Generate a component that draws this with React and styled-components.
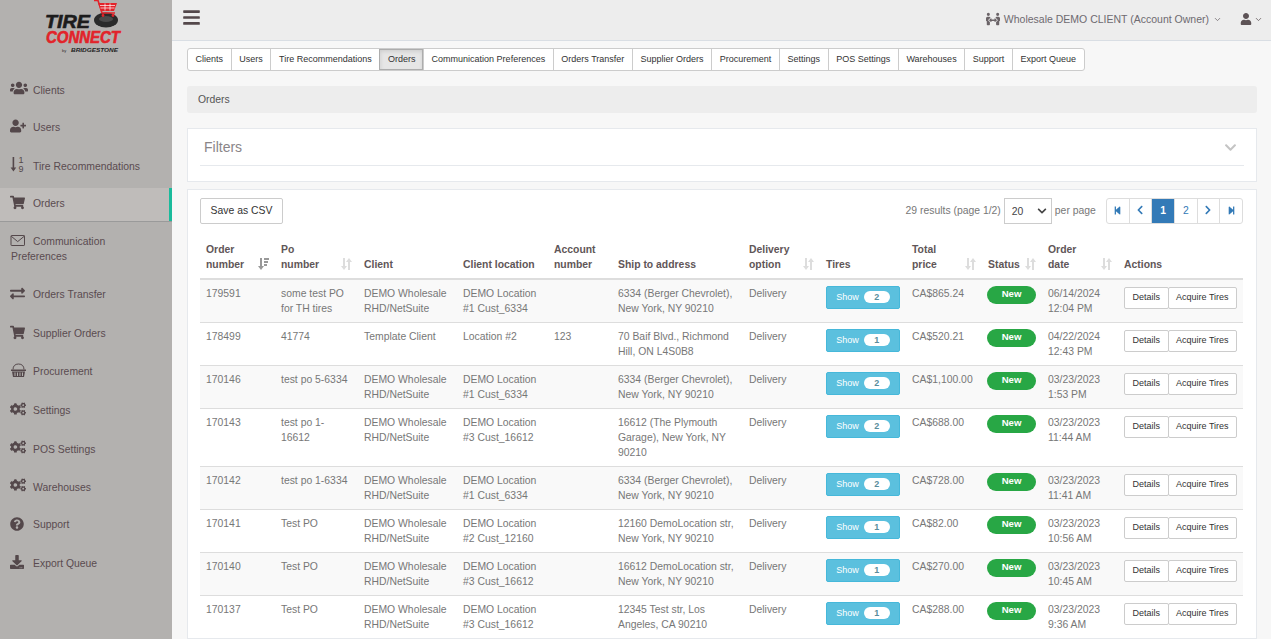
import React from 'react'
import styled, { createGlobalStyle } from 'styled-components'
import {
  FaUsers, FaUserPlus, FaShoppingCart, FaExchangeAlt, FaCogs, FaQuestionCircle, FaDownload,
  FaBars, FaUser, FaPeopleArrows, FaChevronDown, FaChevronLeft, FaChevronRight,
  FaStepBackward, FaStepForward,
} from 'react-icons/fa'
import { ChevronDown } from 'lucide-react'

const GlobalStyle = createGlobalStyle`
  html, body { margin: 0; height: 100%; overflow: hidden; }
  body { font-family: "Liberation Sans", Arial, sans-serif; font-size: 11px; color: #6f686a; background: #f7f7f7; }
  * { box-sizing: border-box; }
`

const Page = styled.div`
  display: flex;
  height: 100vh;
  overflow: hidden;
`
const Sidebar = styled.aside`
  width: 172px;
  flex: none;
  background: #b3b1af;
`
const LogoBox = styled.div`
  height: 73px;
  padding-left: 42px;
`
const SideItem = styled.div`
  padding: 7px 10px 11px 11px;
  margin-bottom: 5.3px;
  line-height: 15px;
  font-size: 10.4px;
  color: #5a4b50;
  height: ${p => (p.$tall ? 48 : 33)}px;
  ${p => p.$active && `
    background: #bfbcba;
    border-right: 3px solid #1abb9c;
    box-shadow: 0 1px 0 #9a9a9a;
  `}
`
const SideIcon = styled.span`
  display: inline-flex;
  align-items: center;
  width: 22px;
  height: 15px;
  vertical-align: -3px;
  color: #54484b;
  svg { flex: none; margin-left: -1px; }
`
const Content = styled.div`
  flex: 1;
  min-width: 0;
`
const TopBar = styled.header`
  height: 41px;
  background: #ededed;
  border-bottom: 1px solid #d9dee4;
  display: flex;
  align-items: center;
  justify-content: space-between;
  padding: 0 8px 2px 11px;
  color: #6e6a70;
`
const Burger = styled.span`
  color: #54484b;
  display: flex;
  margin: 0 0 3px -1px;
`
const Account = styled.div`
  display: flex;
  align-items: center;
  gap: 4px;
  font-size: 10.5px;
  svg { color: #6b6468; }
`
const UserMenu = styled.span`
  margin-left: 14px;
  display: flex;
  align-items: center;
  gap: 2px;
  svg { color: #5d5356; }
`
const Main = styled.main`
  padding: 7px 14px 0 15px;
`
const Tabs = styled.nav`
  display: inline-flex;
  height: 23px;
  background: #fff;
  border: 1px solid #ccc;
  border-radius: 3px;
`
const Tab = styled.span`
  padding: 0 7.6px;
  line-height: 20px;
  font-size: 9px;
  color: #333;
  border-left: ${p => (p.$first ? 'none' : '1px solid #ccc')};
  ${p => p.$active && `
    background: #e6e6e6;
    box-shadow: inset 0 2px 4px rgba(0,0,0,.125);
    outline: 1px solid #adadad;
    outline-offset: -1px;
  `}
`
const Crumb = styled.div`
  margin-top: 15px;
  height: 27px;
  background: #ededed;
  border-radius: 3px;
  padding: 0 11px;
  line-height: 27px;
  font-size: 10.4px;
  color: #555;
`
const Panel = styled.section`
  background: #fff;
  border: 1px solid #e6e9ed;
  padding: ${p => p.$pad};
  margin-top: ${p => p.$top}px;
`
const FilterTitle = styled.div`
  display: flex;
  justify-content: space-between;
  align-items: center;
  height: 37px;
  padding: 0 7px 0 4px;
  border-bottom: 1px solid #e6e9ed;
  font-size: 14px;
  color: #8a8588;
  svg { color: #c4c4c4; }
`
const Controls = styled.div`
  display: flex;
  justify-content: space-between;
  align-items: center;
  height: 26px;
  margin-bottom: 18px;
`
const SaveButton = styled.button`
  height: 26px;
  width: 83px;
  padding: 0 0 2px;
  font: 10.4px "Liberation Sans", Arial, sans-serif;
  color: #333;
  background: #fff;
  border: 1px solid #ccc;
  border-radius: 2px;
`
const Paging = styled.div`
  display: flex;
  align-items: center;
  font-size: 10.4px;
  color: #777;
`
const Caption = styled.span`
  padding-bottom: 2px;
`
const FakeSelect = styled.span`
  display: flex;
  align-items: center;
  justify-content: space-between;
  width: 48px;
  height: 26px;
  margin: 0 3px;
  padding: 0 4px 0 7px;
  border: 1px solid #ccc;
  color: #444;
  svg { color: #444; }
`
const Pager = styled.div`
  display: flex;
  margin-left: 11px;
`
const PageCell = styled.span`
  width: 23.7px;
  height: 26px;
  margin-left: -1px;
  padding-bottom: 2px;
  display: flex;
  align-items: center;
  justify-content: center;
  border: 1px solid #ddd;
  color: ${p => (p.$active ? '#fff' : '#337ab7')};
  background: ${p => (p.$active ? '#337ab7' : '#fff')};
  font-weight: ${p => (p.$active ? 700 : 400)};
  &:first-child { border-radius: 3px 0 0 3px; }
  &:last-child { border-radius: 0 3px 3px 0; }
`
const Table = styled.table`
  width: 1043px;
  table-layout: fixed;
  border-collapse: collapse;
  font-size: 10.4px;
  line-height: 15px;
`
const Th = styled.th`
  position: relative;
  text-align: left;
  vertical-align: bottom;
  padding: 0 ${p => (p.$sortable ? 28 : 6)}px 6px 6px;
  font-weight: 700;
  color: #5f5658;
  border-bottom: 2px solid #ddd;
`
const SortMark = styled.svg`
  position: absolute;
  right: 6px;
  bottom: 8px;
  width: 11px;
  height: 12px;
  fill: ${p => (p.$on ? '#999' : '#ddd')};
`
const Tr = styled.tr`
  background: ${p => (p.$odd ? '#f9f9f9' : '#fff')};
`
const Td = styled.td`
  vertical-align: top;
  padding: 6px;
  border-top: 1px solid #ddd;
  color: #777;
`
const ShowButton = styled.span`
  display: flex;
  align-items: center;
  justify-content: center;
  gap: 5px;
  width: 74px;
  height: 23px;
  padding-bottom: 1px;
  background: #5bc0de;
  border: 1px solid #46b8da;
  border-radius: 2px;
  color: #fff;
  font-size: 9px;
`
const Count = styled.span`
  min-width: 26px;
  height: 12px;
  line-height: 12px;
  text-align: center;
  background: #fff;
  border-radius: 6px;
  color: #5a8d9c;
  font-weight: 700;
  font-size: 9px;
`
const StatusPill = styled.span`
  display: block;
  width: 49px;
  height: 18px;
  margin-left: -1px;
  line-height: 16px;
  text-align: center;
  background: #28a745;
  color: #fff;
  font-size: 9.6px;
  font-weight: 700;
  border-radius: 9px;
`
const ActionGroup = styled.div`
  display: flex;
  width: 113px;
  margin-top: 1px;
`
const ActionButton = styled.span`
  height: 22px;
  line-height: 18px;
  width: ${p => p.$w}px;
  text-align: center;
  background: #fff;
  border: 1px solid #ccc;
  border-radius: 2px;
  color: #333;
  font-size: 9px;
  margin-left: ${p => (p.$joined ? -1 : 0)}px;
`

function SortNumIcon() {
  return (
    <svg width="16" height="16" viewBox="0 0 16 16" fill="currentColor">
      <path d="M2.6 1h1.6v10.5h2L3.4 15.5.6 11.5h2z" />
      <text x="8.500" y="7" fontFamily="Liberation Sans" fontSize="9">1</text>
      <text x="8.500" y="15.500" fontFamily="Liberation Sans" fontSize="9">9</text>
    </svg>
  )
}

function MailIcon() {
  return (
    <svg width="15" height="15" viewBox="0 0 15 15" fill="none" stroke="currentColor" strokeWidth="1">
      <rect x="1" y="2.5" width="13.5" height="10" rx=".6" />
      <path d="M1.2 3.2 7.7 8.6l6.6-5.4" />
    </svg>
  )
}

function BasketIcon() {
  return (
    <svg width="17" height="15" viewBox="0 0 17 15" fill="currentColor">
      <path d="M3 6.5C3 3 5 1 8.5 1S14 3 14 6.5" fill="none" stroke="currentColor" strokeWidth="1" />
      <path d="M1 6.5h15V8H1z" />
      <path d="M2 8.500h13L14 14H3zM4.500 9.500v3.500h1v-3.500zm2.500 0v3.500h1v-3.500zm2.500 0v3.500h1v-3.500zm2.500 0v3.500h1v-3.500z" fillRule="evenodd" />
    </svg>
  )
}

const menu = [
  [<FaUsers size={18} />, 'Clients'],
  [<FaUserPlus size={16} />, 'Users'],
  [<SortNumIcon />, 'Tire Recommendations'],
  [<FaShoppingCart size={15} />, 'Orders', true],
  [<MailIcon />, 'Communication Preferences'],
  [<FaExchangeAlt size={15} />, 'Orders Transfer'],
  [<FaShoppingCart size={15} />, 'Supplier Orders'],
  [<BasketIcon />, 'Procurement'],
  [<FaCogs size={16} />, 'Settings'],
  [<FaCogs size={16} />, 'POS Settings'],
  [<FaCogs size={16} />, 'Warehouses'],
  [<FaQuestionCircle size={14} />, 'Support'],
  [<FaDownload size={14} />, 'Export Queue'],
]

const tabs = ['Clients', 'Users', 'Tire Recommendations', 'Orders', 'Communication Preferences', 'Orders Transfer', 'Supplier Orders', 'Procurement', 'Settings', 'POS Settings', 'Warehouses', 'Support', 'Export Queue']

const cols = [
  ['Order number', 75, 'on'],
  ['Po number', 83, 'off'],
  ['Client', 99],
  ['Client location', 91],
  ['Account number', 64],
  ['Ship to address', 131],
  ['Delivery option', 77, 'off'],
  ['Tires', 86],
  ['Total price', 76, 'off'],
  ['Status', 60, 'off'],
  ['Order date', 76, 'off'],
  ['Actions', 125],
]

const W = 'DEMO Wholesale RHD/NetSuite'
const rows = [
  ['179591', 'some test PO for TH tires', W, 'DEMO Location #1 Cust_6334', '', '6334 (Berger Chevrolet), New York, NY 90210', 2, 'CA$865.24', '06/14/2024 12:04 PM'],
  ['178499', '41774', 'Template Client', 'Location #2', '123', '70 Baif Blvd., Richmond Hill, ON L4S0B8', 1, 'CA$520.21', '04/22/2024 12:43 PM'],
  ['170146', 'test po 5-6334', W, 'DEMO Location #1 Cust_6334', '', '6334 (Berger Chevrolet), New York, NY 90210', 2, 'CA$1,100.00', '03/23/2023 1:53 PM'],
  ['170143', 'test po 1-16612', W, 'DEMO Location #3 Cust_16612', '', '16612 (The Plymouth Garage), New York, NY 90210', 2, 'CA$688.00', '03/23/2023 11:44 AM'],
  ['170142', 'test po 1-6334', W, 'DEMO Location #1 Cust_6334', '', '6334 (Berger Chevrolet), New York, NY 90210', 2, 'CA$728.00', '03/23/2023 11:41 AM'],
  ['170141', 'Test PO', W, 'DEMO Location #2 Cust_12160', '', '12160 DemoLocation str, New York, NY 90210', 1, 'CA$82.00', '03/23/2023 10:56 AM'],
  ['170140', 'Test PO', W, 'DEMO Location #3 Cust_16612', '', '16612 DemoLocation str, New York, NY 90210', 1, 'CA$270.00', '03/23/2023 10:45 AM'],
  ['170137', 'Test PO', W, 'DEMO Location #3 Cust_16612', '', '12345 Test str, Los Angeles, CA 90210', 1, 'CA$288.00', '03/23/2023 9:36 AM'],
]

function Logo() {
  return (
    <svg width="90" height="60" viewBox="0 0 90 60">
      <ellipse cx="64" cy="20" rx="12" ry="7.5" fill="#2a2a2a" />
      <ellipse cx="64" cy="19" rx="7" ry="3" fill="#4a4a4a" />
      <path d="M52 .5 L56 .5 L60 13 L73 13" fill="none" stroke="#e2232a" strokeWidth="1.6" />
      <path d="M56 3 H75 L72 11 H59 Z" fill="#e2232a" />
      <path d="M58 5.500 H73 M58.500 8 H72.500 M63 3.500 V10.500 M68 3.500 V10.500" stroke="#fff" strokeWidth="0.7" />
      <circle cx="61" cy="15.500" r="1.400" fill="#e2232a" />
      <circle cx="71" cy="15.500" r="1.400" fill="#e2232a" />
      <text x="3" y="28" fontFamily="Liberation Sans" fontWeight="700" fontStyle="italic" fontSize="19" fill="#1c1c1c" stroke="#1c1c1c" strokeWidth=".6" textLength="45" lengthAdjust="spacingAndGlyphs">TIRE</text>
      <text x="4" y="43" fontFamily="Liberation Sans" fontWeight="700" fontStyle="italic" fontSize="16" fill="#e2232a" stroke="#e2232a" strokeWidth=".6" textLength="74" lengthAdjust="spacingAndGlyphs">CONNECT</text>
      <text x="20" y="52" fontFamily="Liberation Sans" fontSize="4" fill="#333">by</text>
      <text x="29" y="52" fontFamily="Liberation Sans" fontWeight="700" fontStyle="italic" fontSize="6" fill="#222" textLength="47" lengthAdjust="spacingAndGlyphs">BRIDGESTONE</text>
    </svg>
  )
}

function SortIcon({ on }) {
  return (
    <SortMark $on={on} viewBox="0 0 11 12">
      <path d="M2 0h2v8h2l-3 4-3-4h2z" />
      {on ? <path d="M6 0h5v2H6zM6 3h4v2H6zM6 6h3v2H6z" /> : <path d="M7 12h2V4h2L8 0 5 4h2z" />}
    </SortMark>
  )
}

export default function App() {
  return (
    <>
      <GlobalStyle />
      <Page>
        <Sidebar>
          <LogoBox><Logo /></LogoBox>
          {menu.map(([icon, label, active]) => (
            <SideItem key={label} $active={active} $tall={label.startsWith('Comm')}>
              <SideIcon>{icon}</SideIcon>
              {label}
            </SideItem>
          ))}
        </Sidebar>
        <Content>
          <TopBar>
            <Burger><FaBars size={19} /></Burger>
            <Account>
              <FaPeopleArrows size={14} />
              Wholesale DEMO CLIENT (Account Owner)
              <ChevronDown size={9} strokeWidth={2} />
              <UserMenu>
                <FaUser size={12} />
                <ChevronDown size={9} strokeWidth={2} />
              </UserMenu>
            </Account>
          </TopBar>
          <Main>
            <Tabs>
              {tabs.map((t, i) => (
                <Tab key={t} $first={i === 0} $active={t === 'Orders'}>{t}</Tab>
              ))}
            </Tabs>
            <Crumb>Orders</Crumb>
            <Panel $top={15} $pad="0 12px 15px">
              <FilterTitle>
                Filters
                <FaChevronDown size={13} />
              </FilterTitle>
            </Panel>
            <Panel $top={7} $pad="8px 13px 0 12px">
              <Controls>
                <SaveButton>Save as CSV</SaveButton>
                <Paging>
                  <Caption>29 results (page 1/2)</Caption>
                  <FakeSelect>20 <FaChevronDown size={10} /></FakeSelect>
                  <Caption>per page</Caption>
                  <Pager>
                    <PageCell><FaStepBackward size={9} /></PageCell>
                    <PageCell><FaChevronLeft size={10} /></PageCell>
                    <PageCell $active>1</PageCell>
                    <PageCell>2</PageCell>
                    <PageCell><FaChevronRight size={10} /></PageCell>
                    <PageCell><FaStepForward size={9} /></PageCell>
                  </Pager>
                </Paging>
              </Controls>
              <Table>
                <colgroup>
                  {cols.map(([name, w]) => <col key={name} width={w} />)}
                </colgroup>
                <thead>
                  <tr>
                    {cols.map(([name, , sort]) => (
                      <Th key={name} $sortable={!!sort}>
                        {name}
                        {sort && <SortIcon on={sort === 'on'} />}
                      </Th>
                    ))}
                  </tr>
                </thead>
                <tbody>
                  {rows.map((r, i) => (
                    <Tr key={r[0]} $odd={i % 2 === 0}>
                      <Td>{r[0]}</Td>
                      <Td>{r[1]}</Td>
                      <Td>{r[2]}</Td>
                      <Td>{r[3]}</Td>
                      <Td>{r[4]}</Td>
                      <Td>{r[5]}</Td>
                      <Td>Delivery</Td>
                      <Td><ShowButton>Show <Count>{r[6]}</Count></ShowButton></Td>
                      <Td>{r[7]}</Td>
                      <Td><StatusPill>New</StatusPill></Td>
                      <Td>{r[8]}</Td>
                      <Td>
                        <ActionGroup>
                          <ActionButton $w={45}>Details</ActionButton>
                          <ActionButton $w={70} $joined>Acquire Tires</ActionButton>
                        </ActionGroup>
                      </Td>
                    </Tr>
                  ))}
                </tbody>
              </Table>
            </Panel>
          </Main>
        </Content>
      </Page>
    </>
  )
}
